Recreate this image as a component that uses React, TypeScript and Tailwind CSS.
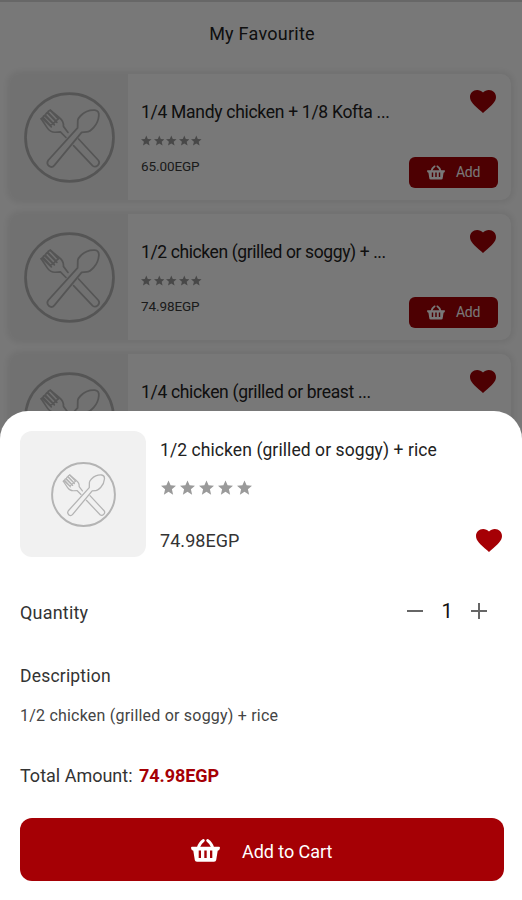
import { useState } from "react";
import clsx from "clsx";

type Meal = {
  id: number;
  title: string;
  titleClass: string;
  price?: string;
};

const meals: Meal[] = [
  { id: 1, title: "1/4 Mandy chicken + 1/8 Kofta ...", titleClass: "tracking-[-0.29px]", price: "65.00EGP" },
  { id: 2, title: "1/2 chicken (grilled or soggy) + ...", titleClass: "tracking-[-0.4px]", price: "74.98EGP" },
  { id: 3, title: "1/4 chicken (grilled or breast ...", titleClass: "tracking-[-0.33px]" },
];

function PlateIcon({ className }: { className?: string }) {
  return (
    <svg viewBox="0 0 90 90" fill="none" stroke="currentColor" strokeLinejoin="round" strokeLinecap="round" className={className}>
      <circle cx="45" cy="45" r="43.5" strokeWidth="2.7" />
      {/* fork */}
      <g strokeWidth="1.7">
        <path d="M17 26.5L23 35.5Q26 40 31 39.8L36 39.5L41.5 45M26 18L35 25.5Q39.5 29 39 34L43.5 40" />
        <path d="M17 26.5L18.8 25L26 33M19.3 24L21 22.8L29 31.2M21.8 21.5L23.5 20L31.5 28.6M24 19L26 18L34 26.5M26 33L29 31.2L31.5 28.6L34 26.5M18.5 26.3L27 34.5M21 23.8L30 32.5M23.5 21L32.5 30" />
        <path d="M54 46.5L73.5 67.5Q75.5 70 73 72.5Q70.5 75 68 73L49 53" />
      </g>
      {/* spoon */}
      <path
        d="M53 35.5L53.2 28Q53.5 26 56 23.5Q62 17.5 70 18Q74.5 18.5 74 23.5Q73.5 30 69 35Q65 39.5 62 39.5L57 40L30 72.5Q27.5 75.5 24.5 73Q22 70.5 24 67.5Z"
        strokeWidth="1.8"
      />
    </svg>
  );
}

function BasketIcon({ className }: { className?: string }) {
  return (
    <svg viewBox="0 0 29 23" className={className}>
      <path
        fill="currentColor"
        fillRule="evenodd"
        d="M1 7.8H28Q29.2 8 28.9 9.3Q28.6 11.6 26.7 11.8L25.2 21Q25 22.8 23 22.8H6Q4 22.8 3.8 21L2.3 11.8Q.4 11.6.1 9.3Q-.2 8 1 7.8ZM7.7 11.6V18.9H10V11.6ZM13.3 11.6V18.9H15.7V11.6ZM19 11.6V18.9H21.3V11.6Z"
      />
      <path d="M7.3 8.7Q8.6 4 12.4 1.5M21.7 8.7Q20.4 4 16.6 1.5" fill="none" stroke="currentColor" strokeWidth="2.7" strokeLinecap="round" />
    </svg>
  );
}

function HeartIcon({ className }: { className?: string }) {
  return (
    <svg viewBox="2 3 20 18.4" preserveAspectRatio="none" fill="currentColor" className={className}>
      <path d="M12 21.35l-1.45-1.32C5.4 15.36 2 12.28 2 8.5 2 5.42 4.42 3 7.5 3c1.74 0 3.41.81 4.5 2.09C13.09 3.81 14.76 3 16.5 3 19.58 3 22 5.42 22 8.5c0 3.78-3.4 6.86-8.55 11.54L12 21.35z" />
    </svg>
  );
}

function Stars({ className, starClass }: { className: string; starClass: string }) {
  return (
    <div className={clsx("flex text-[#9a9a9a]", className)}>
      {[1, 2, 3, 4, 5].map((n) => (
        <svg key={n} viewBox="2 2 20 19" fill="currentColor" className={starClass}>
          <path d="M12 17.27L18.18 21l-1.64-7.03L22 9.24l-7.19-.61L12 2 9.19 8.63 2 9.24l5.46 4.73L5.82 21z" />
        </svg>
      ))}
    </div>
  );
}

function MealCard({ meal }: { meal: Meal }) {
  return (
    <div className="flex h-[126px] shrink-0 overflow-hidden rounded-[10px] bg-white shadow-[0_0_6px_3px_rgba(0,0,0,0.07)]">
      <div className="flex w-[118px] items-center justify-center bg-[#f0f0f0]">
        <PlateIcon className="size-[91px] text-[#b5b5b5]" />
      </div>
      <div className="flex flex-1 justify-between pl-[13px] pr-[13px]">
        <div className="pt-[26px]">
          <h2 className={clsx("whitespace-nowrap text-[17.5px] leading-6 text-[#222]", meal.titleClass)}>{meal.title}</h2>
          <Stars className="mt-[11px] gap-[2px]" starClass="h-[11px] w-[10.6px]" />
          {meal.price && (
            <p className="mt-[11px] text-[13.5px] leading-[18px] tracking-[-0.1px] text-[#3a3a3a]">{meal.price}</p>
          )}
        </div>
        <div className="-ml-10 flex flex-col items-end pt-4">
          <HeartIcon className="mr-[2px] h-[23px] w-[26px] text-[#a50005]" />
          <button className="mt-[44px] flex h-[31px] w-[89px] items-center rounded-md bg-[#a50005] pl-[18px] text-[14px] text-white">
            <BasketIcon className="h-[15px] w-[18px]" />
            <span className="ml-[11px] tracking-[-0.3px]">Add</span>
          </button>
        </div>
      </div>
    </div>
  );
}

export default function App() {
  const [quantity, setQuantity] = useState(1);
  const total = (74.98 * quantity).toFixed(2);

  return (
    <div className="relative h-[900px] w-[522px] overflow-hidden bg-white font-[Roboto,sans-serif]">
      <div className="flex h-full flex-col border-t-2 border-[#dcdcdc]">
        <h1 className="pt-5 text-center text-[18px] leading-6 tracking-[0.25px] text-[#222]">
          <span className="ml-[2px]">My Favourite</span>
        </h1>
        <div className="mt-7 flex flex-col gap-[14px] pl-[10px] pr-[11px]">
          {meals.map((m) => (
            <MealCard key={m.id} meal={m} />
          ))}
        </div>
      </div>

      {/* Backdrop */}
      <div className="absolute inset-0 bg-black/53" />

      {/* Bottom sheet */}
      <div className="absolute inset-x-0 bottom-0 flex h-[489px] flex-col rounded-t-[28px] bg-white pl-5 pr-[18px] pt-5">
        <div className="flex h-[126px]">
          <div className="flex w-[126px] shrink-0 items-center justify-center rounded-xl bg-[#f1f1f1]">
            <PlateIcon className="size-[65px] text-[#b4b4b4]" />
          </div>
          <div className="flex-1 pl-[14px] pt-[7px]">
            <h2 className="whitespace-nowrap text-[17.5px] leading-6 tracking-[0.08px] text-[#222]">1/2 chicken (grilled or soggy) + rice</h2>
            <Stars className="ml-px mt-[18px] gap-1" starClass="h-[15px] w-[15px]" />
            <div className="mt-[32px] flex items-center justify-between pr-[2px]">
              <p className="mt-[2px] text-[18px] leading-6 tracking-[0.05px] text-[#333]">74.98EGP</p>
              <HeartIcon className="h-[23px] w-[26px] text-[#a50005]" />
            </div>
          </div>
        </div>

        <div className="mt-[42px] flex h-6 items-center justify-between pr-[17px]">
          <span className="mt-[2px] text-[18px] tracking-[0.2px] text-[#333]">Quantity</span>
          <div className="flex items-center">
            <button onClick={() => setQuantity(Math.max(1, quantity - 1))} aria-label="Decrease">
              <svg viewBox="0 0 16 16" className="size-4 text-[#666]" stroke="currentColor" strokeWidth="2">
                <path d="M0 8H16" />
              </svg>
            </button>
            <span className="w-12 text-center text-[20px] leading-6 text-[#111]">{quantity}</span>
            <button onClick={() => setQuantity(quantity + 1)} aria-label="Increase">
              <svg viewBox="0 0 16 16" className="size-4 text-[#666]" stroke="currentColor" strokeWidth="2">
                <path d="M0 8H16M8 0V16" />
              </svg>
            </button>
          </div>
        </div>

        <h3 className="mt-[41px] text-[17.5px] leading-6 tracking-[0.2px] text-[#333]">Description</h3>
        <p className="mt-4 text-[16px] leading-6 tracking-[0.21px] text-[#444]">1/2 chicken (grilled or soggy) + rice</p>

        <div className="mt-9 flex text-[18px] leading-6">
          <span className="w-[119px] whitespace-nowrap text-[#333]">Total Amount:</span>
          <span className="font-bold tracking-[-0.05px] text-[#a50005]">{total}EGP</span>
        </div>

        <button className="mt-[30px] flex h-[63px] shrink-0 items-center rounded-xl bg-[#a50005] pl-[171px] pt-[2px] text-white">
          <BasketIcon className="h-[23px] w-[29px]" />
          <span className="ml-[22px] mt-[2px] text-[18px] tracking-[-0.05px]">Add to Cart</span>
        </button>
      </div>
    </div>
  );
}
